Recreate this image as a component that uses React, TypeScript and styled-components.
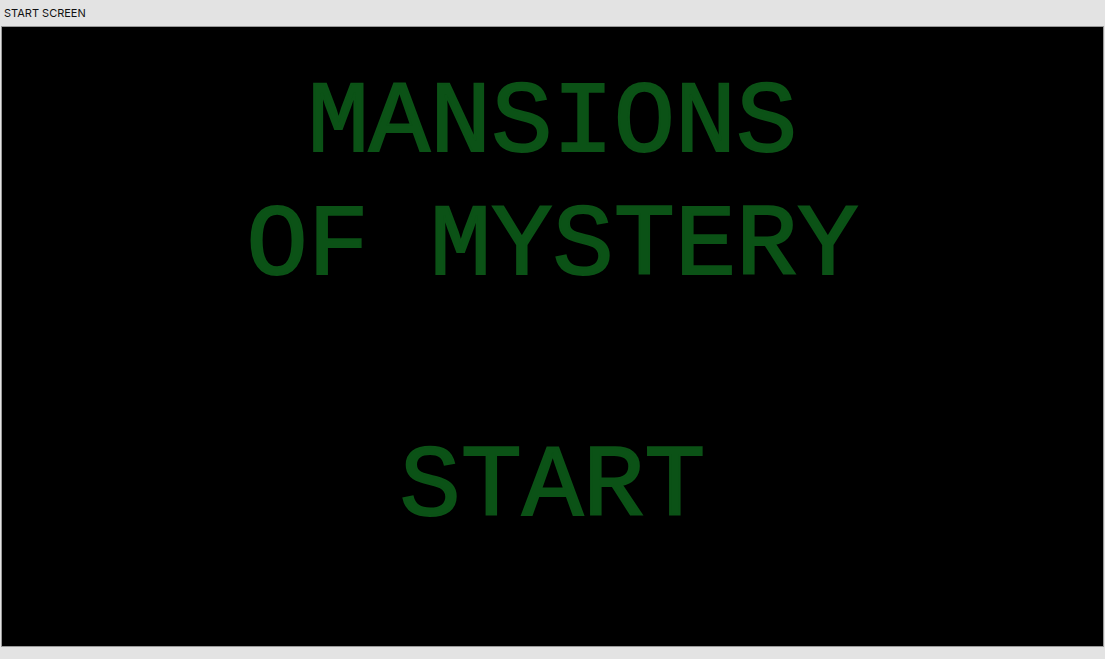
import React from "react";
import styled, { createGlobalStyle } from "styled-components";

const Global = createGlobalStyle`
  html, body { margin: 0; padding: 0; background: #e3e3e3; }
  body { width: 1105px; height: 659px; overflow: hidden; }
`;

const Window = styled.div`
  display: flex;
  flex-direction: column;
  width: 1105px;
  height: 659px;
  background: #e3e3e3;
`;

const TitleBar = styled.div`
  height: 26px;
  display: flex;
  align-items: center;
  padding-left: 4px;
  font-family: "Inter", "Liberation Sans", sans-serif;
  font-size: 11px;
  color: #111;
`;

const Screen = styled.div`
  margin: 0 1px;
  height: 619px;
  background: #000;
  border: 1px solid #9a9a9a;
  display: flex;
  flex-direction: column;
  align-items: center;
`;

const monoStack = `"Courier New", "Nimbus Mono PS", "Nimbus Mono L", "FreeMono", "Liberation Mono", monospace`;

const Title = styled.h1`
  margin: 36px 0 0;
  font-family: ${monoStack};
  font-weight: normal;
  font-size: 102px;
  line-height: 123px;
  color: #0b5216;
  -webkit-text-stroke: 2px #0b5216;
  text-align: center;
`;

const StartButton = styled.button`
  margin-top: 118px;
  background: none;
  border: none;
  padding: 0;
  font-family: ${monoStack};
  font-weight: normal;
  font-size: 102px;
  line-height: 123px;
  color: #0b5216;
  -webkit-text-stroke: 2px #0b5216;
  cursor: pointer;
`;

export default function App() {
  return (
    <Window>
      <Global />
      <TitleBar>START SCREEN</TitleBar>
      <Screen>
        <Title>
          MANSIONS
          <br />
          OF MYSTERY
        </Title>
        <StartButton>START</StartButton>
      </Screen>
    </Window>
  );
}
